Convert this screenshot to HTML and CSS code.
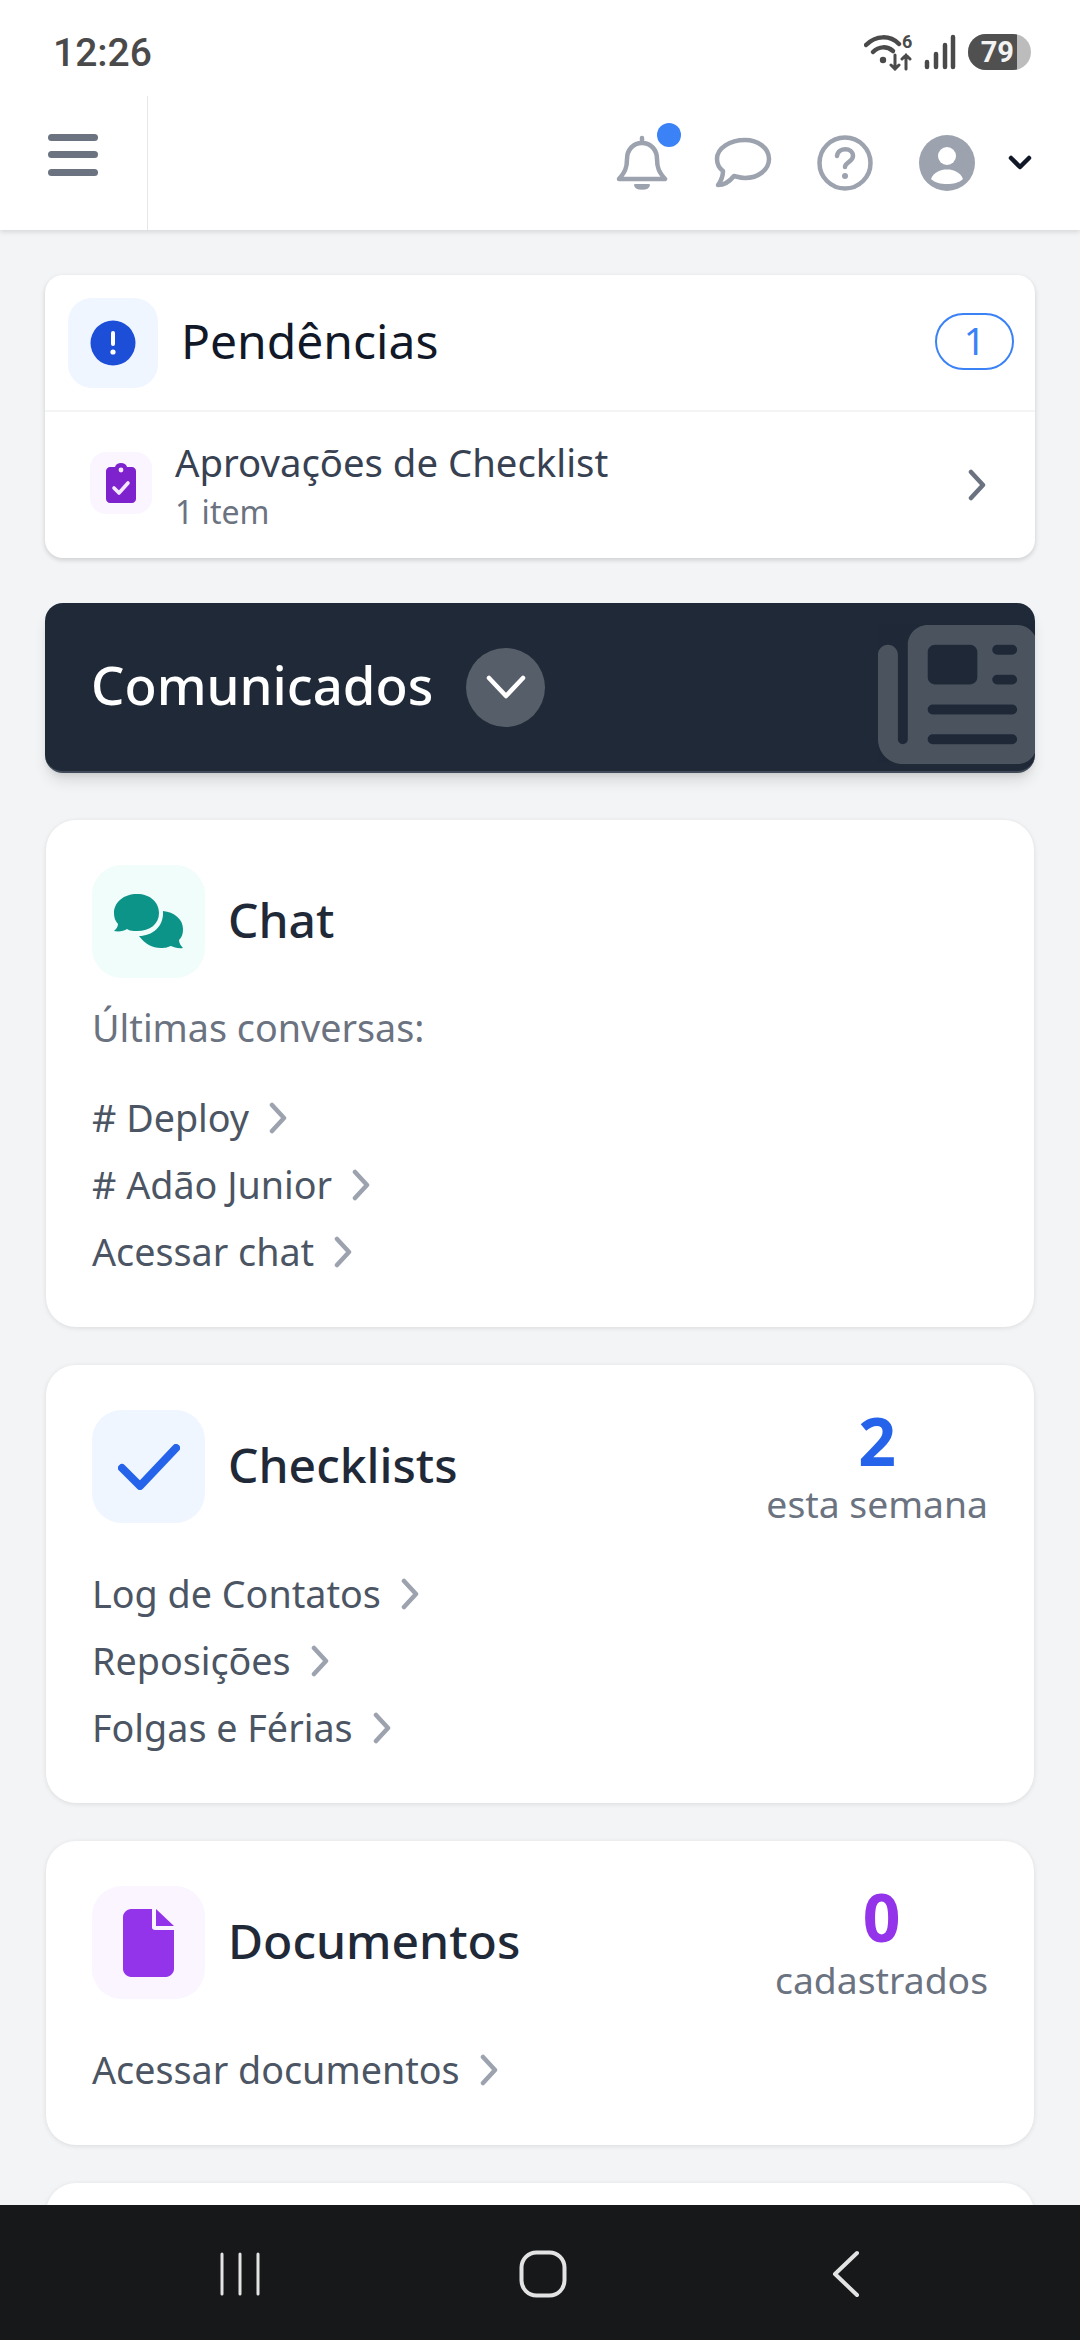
FILE: index.html
```html
<!DOCTYPE html>
<html lang="pt-BR">
<head>
    <meta charset="UTF-8">
    <meta name="viewport" content="width=device-width, initial-scale=1.0">
    <title>Painel</title>
    <link rel="stylesheet" href="styles.css">
</head>
<body>
    <div class="status-bar">
        <span class="clock">12:26</span>
        <div class="status-icons">
            <svg class="wifi" width="56" height="38" viewBox="0 0 56 38" fill="none" stroke="#4a4a4a" stroke-linecap="round">
                <path d="M2 12C12 2 26 2 35 11" stroke-width="4.5"/>
                <path d="M9 19C15 13 23 13 29 18" stroke-width="4.5"/>
                <circle cx="19" cy="27" r="3.2" fill="#4a4a4a" stroke="none"/>
                <path d="M31 22V36M27 32L31 36L35 32M42 36V22M38 26L42 22L46 26" stroke-width="3"/>
            </svg>
            <span class="wifi-six">6</span>
            <svg class="signal" width="32" height="36" viewBox="0 0 32 36" fill="none" stroke="#4a4a4a" stroke-width="4.5" stroke-linecap="round">
                <path d="M3 33V28M12 33V20M21 33V11M29 33V3"/>
            </svg>
            <div class="battery"><div class="battery-level">79</div></div>
        </div>
    </div>

    <header class="topbar">
        <div class="menu-cell">
            <svg width="52" height="44" viewBox="0 0 52 44" fill="#6b7280">
                <rect y="1" width="50" height="7" rx="3.5"/>
                <rect y="18" width="50" height="7" rx="3.5"/>
                <rect y="36" width="50" height="7" rx="3.5"/>
            </svg>
        </div>
        <div class="topbar-icons">
            <div class="bell">
                <svg width="52" height="58" viewBox="0 0 52 58" fill="none" stroke="#9ca3af" stroke-width="4.5" stroke-linejoin="round" stroke-linecap="round">
                    <path d="M26 3V7M11 24C11 15 17 8 26 8C35 8 41 15 41 24C41 33 43 37 49 44H3C9 37 11 33 11 24Z"/>
                    <path d="M19 50C20 55 32 55 33 50Z" fill="#9ca3af" stroke-width="2"/>
                </svg>
                <span class="bell-dot"></span>
            </div>
            <svg class="chat-icon" width="58" height="52" viewBox="0 0 58 52" fill="none" stroke="#9ca3af" stroke-width="4.5" stroke-linejoin="round">
                <path d="M31 3C44 3 55 11 55 22C55 33 44 41 31 41C27 41 24 40 20 39C16 44 10 48 4 48C7 44 9 39 9 34C5 31 3 27 3 22C3 11 16 3 31 3Z"/>
            </svg>
            <svg class="help-icon" width="56" height="56" viewBox="0 0 56 56" fill="none" stroke="#9ca3af" stroke-width="4.5" stroke-linecap="round">
                <circle cx="28" cy="28" r="25.5"/>
                <path d="M20 21C21 12 36 12 36 21C36 27 28 27 28 32"/>
                <circle cx="28" cy="41" r="3" fill="#9ca3af" stroke="none"/>
            </svg>
            <svg class="user-icon" width="56" height="56" viewBox="0 0 56 56">
                <circle cx="28" cy="28" r="28" fill="#9ca3af"/>
                <circle cx="28" cy="21" r="9" fill="#fff"/>
                <path d="M12 44C15 37 21 34.5 28 34.5C35 34.5 41 37 44 44C40 48 34 49 28 49C22 49 16 48 12 44Z" fill="#fff"/>
            </svg>
            <svg class="caret" width="24" height="16" viewBox="0 0 24 16" fill="none" stroke="#111827" stroke-width="4.5" stroke-linecap="round" stroke-linejoin="round">
                <path d="M3 3L12 12L21 3"/>
            </svg>
        </div>
    </header>

    <main class="content">
        <section class="pending">
            <div class="pending-head">
                <div class="tile tile-blue pending-tile">
                    <svg width="46" height="46" viewBox="0 0 46 46">
                        <circle cx="23" cy="23" r="22.5" fill="#1d4ed8"/>
                        <rect x="21" y="11" width="4" height="15" rx="2" fill="#fff"/>
                        <circle cx="23" cy="32" r="2.6" fill="#fff"/>
                    </svg>
                </div>
                <h2 class="pending-title">Pendências</h2>
                <span class="pill">1</span>
            </div>
            <div class="pending-row">
                <div class="tile tile-purple row-tile">
                    <svg width="30" height="40" viewBox="0 0 30 40">
                        <path d="M4 4H9C10 1 12 0 15 0C18 0 20 1 21 4H26C28 4 30 6 30 8V36C30 38 28 40 26 40H4C2 40 0 38 0 36V8C0 6 2 4 4 4Z" fill="#7e22ce"/>
                        <circle cx="15" cy="7" r="2.4" fill="#f3e8ff"/>
                        <path d="M8 25L13 30L22 20" fill="none" stroke="#f3e8ff" stroke-width="3.6" stroke-linecap="round" stroke-linejoin="round"/>
                    </svg>
                </div>
                <div class="row-text">
                    <div class="row-title">Aprovações de Checklist</div>
                    <div class="row-sub">1 item</div>
                </div>
                <svg class="row-chevron" width="18" height="32" viewBox="0 0 18 32" fill="none" stroke="#6b7280" stroke-width="4.5" stroke-linecap="round" stroke-linejoin="round">
                    <path d="M3 3L15 16L3 29"/>
                </svg>
            </div>
        </section>

        <section class="news">
            <h2 class="news-title">Comunicados</h2>
            <div class="news-toggle">
                <svg width="40" height="26" viewBox="0 0 40 26" fill="none" stroke="#fff" stroke-width="4.5" stroke-linecap="round" stroke-linejoin="round">
                    <path d="M3 4L20 22L37 4"/>
                </svg>
            </div>
            <svg class="news-bg" width="159" height="159" viewBox="0 0 512 512" fill="#fff">
                <path d="M96 96c0-35.3 28.7-64 64-64H448c35.3 0 64 28.7 64 64V416c0 35.3-28.7 64-64 64H80c-44.2 0-80-35.8-80-80V128c0-17.7 14.3-32 32-32s32 14.3 32 32V400c0 8.8 7.2 16 16 16s16-7.2 16-16V96zm64 24v80c0 13.3 10.7 24 24 24H296c13.3 0 24-10.7 24-24V120c0-13.3-10.7-24-24-24H184c-13.3 0-24 10.7-24 24zm208-8c0 8.8 7.2 16 16 16h48c8.8 0 16-7.2 16-16s-7.2-16-16-16H384c-8.8 0-16 7.2-16 16zm0 96c0 8.8 7.2 16 16 16h48c8.8 0 16-7.2 16-16s-7.2-16-16-16H384c-8.8 0-16 7.2-16 16zM160 304c0 8.8 7.2 16 16 16H432c8.8 0 16-7.2 16-16s-7.2-16-16-16H176c-8.8 0-16 7.2-16 16zm0 96c0 8.8 7.2 16 16 16H432c8.8 0 16-7.2 16-16s-7.2-16-16-16H176c-8.8 0-16 7.2-16 16z"/>
            </svg>
        </section>

        <section class="card card-chat">
            <div class="card-head">
                <div class="tile tile-teal">
                    <svg width="70" height="56" viewBox="0 0 70 56" fill="#0d9488">
                        <path d="M23 0C36 0 45 8 45 19C45 30 36 37 23 37C19 37 16 37 13 35C10 37 5 38 0 37C2 35 4 33 4 30C1 27 0 23 0 19C0 8 10 0 23 0Z"/>
                        <path d="M49 17C60 18 69 25 69 35C69 40 68 43 65 46C65 49 67 52 69 54C64 55 60 53 57 52C54 53 52 54 47 54C38 54 31 50 25 42C38 42 50 33 49 17Z"/>
                    </svg>
                </div>
                <h3 class="card-title">Chat</h3>
            </div>
            <p class="card-note">Últimas conversas:</p>
            <ul class="links">
                <li><span># Deploy</span><svg class="chev" width="18" height="32" viewBox="0 0 18 32"><path d="M3 3L15 16L3 29"/></svg></li>
                <li><span># Adão Junior</span><svg class="chev" width="18" height="32" viewBox="0 0 18 32"><path d="M3 3L15 16L3 29"/></svg></li>
                <li><span>Acessar chat</span><svg class="chev" width="18" height="32" viewBox="0 0 18 32"><path d="M3 3L15 16L3 29"/></svg></li>
            </ul>
        </section>

        <section class="card card-checklists">
            <div class="card-head">
                <div class="tile tile-blue">
                    <svg width="62" height="46" viewBox="0 0 62 46" fill="none" stroke="#2563eb" stroke-width="8" stroke-linecap="round" stroke-linejoin="round">
                        <path d="M4 24L22 42L58 4"/>
                    </svg>
                </div>
                <h3 class="card-title">Checklists</h3>
                <div class="stat">
                    <div class="stat-num stat-blue">2</div>
                    <div class="stat-label">esta semana</div>
                </div>
            </div>
            <ul class="links">
                <li><span>Log de Contatos</span><svg class="chev" width="18" height="32" viewBox="0 0 18 32"><path d="M3 3L15 16L3 29"/></svg></li>
                <li><span>Reposições</span><svg class="chev" width="18" height="32" viewBox="0 0 18 32"><path d="M3 3L15 16L3 29"/></svg></li>
                <li><span>Folgas e Férias</span><svg class="chev" width="18" height="32" viewBox="0 0 18 32"><path d="M3 3L15 16L3 29"/></svg></li>
            </ul>
        </section>

        <section class="card card-docs">
            <div class="card-head">
                <div class="tile tile-purple">
                    <svg width="52" height="68" viewBox="0 0 52 68" fill="#9333ea">
                        <path d="M8 0H29V19C29 20 31 21 32 21H51V60C51 64 47 68 43 68H8C4 68 0 64 0 60V8C0 4 4 0 8 0Z"/>
                        <path d="M33 0L51 17H33Z"/>
                    </svg>
                </div>
                <h3 class="card-title">Documentos</h3>
                <div class="stat">
                    <div class="stat-num stat-purple">0</div>
                    <div class="stat-label">cadastrados</div>
                </div>
            </div>
            <ul class="links">
                <li><span>Acessar documentos</span><svg class="chev" width="18" height="32" viewBox="0 0 18 32"><path d="M3 3L15 16L3 29"/></svg></li>
            </ul>
        </section>

        <section class="card"></section>
    </main>

    <nav class="android-nav">
        <svg width="40" height="44" viewBox="0 0 40 44" fill="none" stroke="#e3e3e3" stroke-width="3" stroke-linecap="round">
            <path d="M2 2V42M20 2V42M38 2V42"/>
        </svg>
        <svg class="nav-home" width="48" height="48" viewBox="0 0 48 48" fill="none" stroke="#e3e3e3" stroke-width="4">
            <rect x="2.5" y="2.5" width="43" height="43" rx="15"/>
        </svg>
        <svg width="28" height="48" viewBox="0 0 28 48" fill="none" stroke="#e3e3e3" stroke-width="4" stroke-linecap="round" stroke-linejoin="round">
            <path d="M25 3L3 24L25 45"/>
        </svg>
    </nav>
</body>
</html>
```

FILE: styles.css
```css
* {
    box-sizing: border-box;
}
html, body {
    margin: 0;
    padding: 0;
}
body {
    width: 1080px;
    height: 2340px;
    display: flex;
    flex-direction: column;
    overflow: hidden;
    background-color: #f3f4f6;
    font-family: "Noto Sans", "Open Sans", sans-serif;
    color: #1f2937;
}
h2, h3, p, ul {
    margin: 0;
    padding: 0;
}

/* phone status bar */
.status-bar {
    height: 96px;
    flex: none;
    display: flex;
    align-items: center;
    justify-content: space-between;
    padding: 8px 49px 0 53px;
    background-color: #fff;
    position: relative;
    z-index: 1;
}
.clock {
    font-family: Roboto, sans-serif;
    font-size: 39px;
    font-weight: 500;
    color: #4a4a4a;
    padding-top: 2px;
}
.status-icons {
    display: flex;
    align-items: center;
    position: relative;
}
.wifi-six {
    position: absolute;
    left: 38px;
    top: -2px;
    font-family: Roboto, sans-serif;
    font-size: 18px;
    font-weight: 700;
    color: #4a4a4a;
}
.signal {
    margin-left: 4px;
}
.battery {
    width: 63px;
    height: 36px;
    margin-left: 12px;
    border-radius: 18px;
    overflow: hidden;
    background-color: #bcbcbc;
}
.battery-level {
    width: 49px;
    height: 36px;
    padding-right: 3px;
    background-color: #505050;
    color: #f3f3f3;
    font-family: Roboto, sans-serif;
    font-size: 29px;
    font-weight: 700;
    line-height: 36px;
    text-align: right;
}

/* top bar */
.topbar {
    height: 134px;
    flex: none;
    display: flex;
    justify-content: space-between;
    background-color: #fff;
    box-shadow: 0 2px 5px rgba(0, 0, 0, 0.12);
    position: relative;
}
.menu-cell {
    width: 148px;
    display: flex;
    align-items: center;
    padding: 0 0 16px 48px;
    border-right: 1px solid #e5e7eb;
}
.topbar-icons {
    display: flex;
    align-items: center;
    padding-right: 48px;
}
.bell {
    position: relative;
    width: 52px;
    height: 58px;
    margin-top: 2px;
}
.bell-dot {
    position: absolute;
    left: 41px;
    top: -12px;
    width: 24px;
    height: 24px;
    border-radius: 50%;
    background-color: #3b82f6;
}
.chat-icon {
    margin-left: 46px;
}
.help-icon {
    margin-left: 45px;
}
.user-icon {
    margin-left: 46px;
}
.caret {
    margin-left: 33px;
}

/* page body */
.content {
    flex: 1;
    min-height: 0;
    overflow: hidden;
    padding: 45px 45px 0;
}
.tile {
    flex: none;
    display: flex;
    align-items: center;
    justify-content: center;
    width: 113px;
    height: 113px;
    border-radius: 30px;
}
.tile-blue {
    background-color: #eff6ff;
}
.tile-purple {
    background-color: #faf5ff;
}
.tile-teal {
    background-color: #f0fdfa;
}

/* pendencias */
.pending {
    height: 283px;
    margin-bottom: 45px;
    border-radius: 18px;
    background-color: #fff;
    box-shadow: 0 2px 5px rgba(0, 0, 0, 0.16);
}
.pending-head {
    height: 137px;
    display: flex;
    align-items: center;
    padding: 0 21px 0 23px;
    border-bottom: 2px solid #f3f4f6;
}
.pending-tile {
    width: 90px;
    height: 90px;
    border-radius: 24px;
}
.pending-title {
    flex: 1;
    margin-left: 23px;
    padding-bottom: 4px;
    font-size: 48px;
    font-weight: 400;
    color: #111827;
}
.pill {
    width: 79px;
    height: 57px;
    margin-bottom: 2px;
    border: 2px solid #3b82f6;
    border-radius: 29px;
    color: #3b82f6;
    font-size: 38px;
    line-height: 51px;
    text-align: center;
}
.pending-row {
    height: 142px;
    display: flex;
    align-items: center;
    padding: 0 49px 0 45px;
}
.row-tile {
    width: 62px;
    height: 62px;
    border-radius: 16px;
}
.row-text {
    flex: 1;
    margin: 6px 0 0 23px;
}
.row-title {
    font-size: 38.3px;
    line-height: 50px;
    color: #374151;
}
.row-sub {
    font-size: 32px;
    line-height: 49px;
    color: #6b7280;
}
.row-chevron {
    margin-top: 4px;
}

/* comunicados */
.news {
    height: 170px;
    margin-bottom: 47px;
    display: flex;
    align-items: center;
    position: relative;
    overflow: hidden;
    padding: 0 0 6px 46px;
    border-radius: 18px;
    background-color: #1f2937;
    border-bottom: 2px solid #414b59;
    box-shadow: 0 10px 15px -3px rgba(0, 0, 0, 0.12), 0 4px 6px -2px rgba(0, 0, 0, 0.08);
}
.news-title {
    font-size: 52.7px;
    font-weight: 500;
    color: #fff;
}
.news-toggle {
    width: 79px;
    height: 79px;
    margin: 6px 0 0 33px;
    display: flex;
    align-items: center;
    justify-content: center;
    border-radius: 50%;
    background-color: #565e69;
}
.news-bg {
    position: absolute;
    right: -2px;
    top: 12px;
    opacity: 0.2;
}

/* cards */
.card {
    min-height: 120px;
    margin: 0 1px 38px;
    padding: 45px 46px 0;
    border-radius: 30px;
    background-color: #fff;
    box-shadow: 0 1px 5px rgba(0, 0, 0, 0.1);
}
.card-chat {
    height: 507px;
}
.card-checklists {
    height: 438px;
}
.card-docs {
    height: 304px;
}
.card-head {
    display: flex;
    align-items: center;
}
.card-title {
    flex: 1;
    margin-left: 23px;
    padding-bottom: 4px;
    font-size: 48px;
    font-weight: 500;
    color: #1f2937;
}
.stat {
    text-align: center;
}
.stat-num {
    margin-bottom: 15px;
    font-size: 66px;
    font-weight: 700;
    line-height: 60px;
}
.stat-blue {
    color: #2563eb;
}
.stat-purple {
    color: #9333ea;
}
.stat-label {
    font-size: 37.3px;
    line-height: 38px;
    color: #6b7280;
}
.card-note {
    margin-top: 25px;
    font-size: 37.7px;
    line-height: 50px;
    color: #6b7280;
}
.links {
    list-style: none;
    margin-top: 37px;
}
.card-chat .links {
    margin-top: 31px;
}
.links li {
    height: 67px;
    display: flex;
    align-items: center;
    font-size: 37.7px;
    color: #4b5563;
}
.chev {
    margin-left: 20px;
    fill: none;
    stroke: #9ca3af;
    stroke-width: 4.5;
    stroke-linecap: round;
    stroke-linejoin: round;
}

/* android nav */
.android-nav {
    height: 135px;
    flex: none;
    display: flex;
    align-items: center;
    justify-content: space-between;
    padding: 2px 220px 0;
    background-color: #17181a;
}
.nav-home {
    margin-right: 6px;
}
```
